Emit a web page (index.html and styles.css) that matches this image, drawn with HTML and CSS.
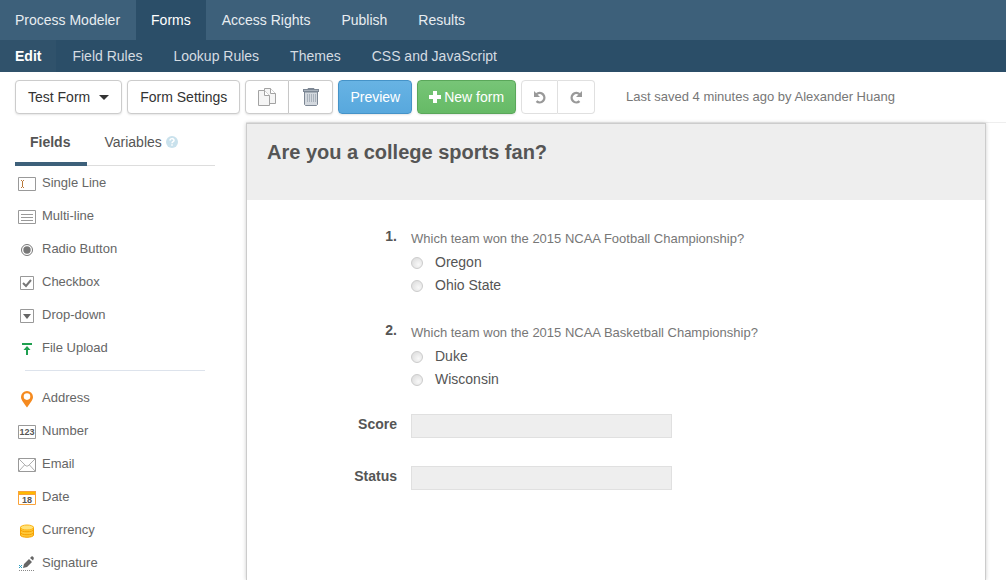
FILE: index.html
```html
<!DOCTYPE html>
<html lang="en">
<head>
    <meta charset="UTF-8">
    <meta name="viewport" content="width=device-width, initial-scale=1.0">
    <title>Test Form - Form Builder</title>
    <link rel="stylesheet" href="styles.css">
</head>
<body>
    <nav class="main-nav">
        <a href="#">Process Modeler</a>
        <a href="#" class="active">Forms</a>
        <a href="#">Access Rights</a>
        <a href="#">Publish</a>
        <a href="#">Results</a>
    </nav>
    <nav class="sub-nav">
        <a href="#" class="active">Edit</a>
        <a href="#">Field Rules</a>
        <a href="#">Lookup Rules</a>
        <a href="#">Themes</a>
        <a href="#">CSS and JavaScript</a>
    </nav>

    <div class="toolbar">
        <button type="button" class="btn" aria-haspopup="true">Test Form <span class="caret"></span></button>
        <button type="button" class="btn">Form Settings</button>
        <div class="btn-group">
            <button type="button" class="btn btn-icon" aria-label="Copy form">
                <svg width="18" height="18" viewBox="0 0 18 18" fill="#f5f5f5" stroke="#a3a3a3">
                    <path d="M6.5 .5h6l5 5v10h-11z"/>
                    <path d="M12.5 .5v5h5" fill="#fff"/>
                    <path d="M.5 2.500h6l5 5v10H.5z"/>
                    <path d="M6.5 2.500v5h5" fill="#fff"/>
                </svg>
            </button>
            <button type="button" class="btn btn-icon" aria-label="Delete form">
                <svg width="16" height="18" viewBox="0 0 16 18" fill="none">
                    <path d="M5 1.500V.5h6v1" stroke="#7d8794"/>
                    <path d="M0 1h16v3H0z" fill="#7d8794"/>
                    <path d="M1 2.500h14" stroke="#a9b2bc"/>
                    <path d="M1.500 4v12.500l1 1h11l1-1V4z" fill="#d3d8de" stroke="#7d8794"/>
                    <path d="M4.500 6v8M6.500 6v8M8.500 6v8M10.500 6v8M12.500 6v8" stroke="#a9b2bc"/>
                </svg>
            </button>
        </div>
        <button type="button" class="btn btn-blue">Preview</button>
        <button type="button" class="btn btn-green">
            <svg width="12" height="12" viewBox="0 0 12 12"><path d="M4 0h4v4h4v4H8v4H4V8H0V4h4z" fill="#fff"/></svg>
            New form
        </button>
        <div class="btn-group btn-group-light">
            <button type="button" class="btn btn-history" aria-label="Undo">
                <svg width="14" height="13" viewBox="0 0 14 13" fill="none">
                    <path d="M3.500 3.200A4.700 4.700 0 1 1 3.500 10.200" stroke="#999" stroke-width="2.400"/>
                    <path d="M1 0v6h6z" fill="#999"/>
                </svg>
            </button>
            <button type="button" class="btn btn-history" aria-label="Redo">
                <svg width="14" height="13" viewBox="0 0 14 13" fill="none">
                    <path d="M10.500 3.200A4.700 4.700 0 1 0 10.500 10.200" stroke="#999" stroke-width="2.400"/>
                    <path d="M13 0v6H7z" fill="#999"/>
                </svg>
            </button>
        </div>
        <span class="last-saved">Last saved 4 minutes ago by Alexander Huang</span>
    </div>

    <div class="builder">
        <aside class="sidebar">
            <div class="tabs">
                <a href="#" class="active">Fields</a>
                <a href="#">Variables
                    <svg width="12" height="12" viewBox="0 0 12 12" fill="none">
                        <circle cx="6" cy="6" r="6" fill="#c9e1ec"/>
                        <path d="M4 4.600C4 2 8 2 8 4.400 8 5.800 6 5.600 6 7.300M6 8.300v1.500" stroke="#fff" stroke-width="1.500"/>
                    </svg>
                </a>
            </div>
            <ul class="field-list">
                <li>
                    <svg width="18" height="18" viewBox="0 0 18 18" fill="none">
                        <path d="M.5 2.500h17v13H.5z" stroke="#999"/>
                        <path d="M3 5.500h1M5 5.500h1M4.500 6v6M3 12.500h1M5 12.500h1" stroke="#b8793a"/>
                    </svg>
                    Single Line
                </li>
                <li>
                    <svg width="18" height="18" viewBox="0 0 18 18" fill="none" stroke="#999">
                        <path d="M.5 2.500h17v13H.5zM3 6.500h12M3 9.500h12M3 12.500h12"/>
                    </svg>
                    Multi-line
                </li>
                <li>
                    <svg width="18" height="18" viewBox="0 0 18 18">
                        <circle cx="9" cy="9" r="5.500" fill="#fff" stroke="#777"/>
                        <circle cx="9" cy="9" r="3.700" fill="#777"/>
                    </svg>
                    Radio Button
                </li>
                <li>
                    <svg width="18" height="18" viewBox="0 0 18 18" fill="none">
                        <path d="M2.500 2.500h13v13h-13z" stroke="#999"/>
                        <path d="M5 9l3 3 5-6" stroke="#777" stroke-width="2"/>
                    </svg>
                    Checkbox
                </li>
                <li>
                    <svg width="18" height="18" viewBox="0 0 18 18" fill="none">
                        <path d="M2.500 2.500h13v13h-13z" stroke="#999"/>
                        <path d="M5 7h8l-4 5z" fill="#666"/>
                    </svg>
                    Drop-down
                </li>
                <li>
                    <svg width="18" height="18" viewBox="0 0 18 18" fill="#1fa050">
                        <path d="M4 3h10v2H4zM9 6l3.500 4H10v5H8v-5H5.500z"/>
                    </svg>
                    File Upload
                </li>
            </ul>
            <hr class="divider">
            <ul class="field-list">
                <li>
                    <svg width="18" height="18" viewBox="0 0 18 18">
                        <path fill-rule="evenodd" d="M9 1a6 6 0 0 1 6 6c0 3-3 6-6 10.500C6 13 3 10 3 7a6 6 0 0 1 6-6zm0 2.300a3.300 3.300 0 1 0 0 6.600 3.300 3.300 0 0 0 0-6.600z" fill="#f58a1f"/>
                    </svg>
                    Address
                </li>
                <li>
                    <svg width="18" height="18" viewBox="0 0 18 18">
                        <path d="M.5 2.500h17v13H.5z" fill="#fff" stroke="#999"/>
                        <text x="9" y="12" class="icon-text">123</text>
                    </svg>
                    Number
                </li>
                <li>
                    <svg width="18" height="18" viewBox="0 0 18 18" fill="none" stroke="#999">
                        <path d="M.5 2.500h17v13H.5z"/>
                        <path d="M1 3l7 7h2l7-7M1 15l5.500-6M17 15l-5.500-6" stroke-width=".8"/>
                    </svg>
                    Email
                </li>
                <li>
                    <svg width="18" height="18" viewBox="0 0 18 18">
                        <path d="M.5 3.500h17v12H.5z" fill="#fff" stroke="#f9a33a"/>
                        <path d="M0 2h18v4H0z" fill="#f9a33a"/>
                        <path d="M1 3h16v2H1z" fill="#fdb900"/>
                        <text x="9" y="14" class="icon-text">18</text>
                    </svg>
                    Date
                </li>
                <li>
                    <svg width="18" height="18" viewBox="0 0 18 18" stroke="#f5a000">
                        <path d="M2.500 5v8c0 3 13 3 13 0V5z" fill="#ffc83a"/>
                        <path d="M2.500 7.500c0 3 13 3 13 0M2.500 10.500c0 3 13 3 13 0" fill="none"/>
                        <ellipse cx="9" cy="5.500" rx="6.500" ry="2.500" fill="#ffe27a" stroke="#fdb515"/>
                    </svg>
                    Currency
                </li>
                <li>
                    <svg width="18" height="18" viewBox="0 0 18 18">
                        <path d="M5 13l1-4 5-5 3 3-5 5zM12 3l1.500-1.500c1-.8 3 1.200 2.200 2.200L15 5.500z" fill="#666"/>
                        <path d="M1 10l3 3M4 10l-3 3" stroke="#2a9dc0"/>
                        <path d="M1 15.500h15" stroke="#888" stroke-dasharray="1 1"/>
                    </svg>
                    Signature
                </li>
            </ul>
        </aside>

        <main class="canvas">
            <form class="form-preview">
                <header class="form-header">
                    <h1>Are you a college sports fan?</h1>
                </header>
                <div class="form-body">
                    <div class="form-row" role="radiogroup" aria-labelledby="q1">
                        <span class="row-label">1.</span>
                        <div>
                            <p class="question" id="q1">Which team won the 2015 NCAA Football Championship?</p>
                            <label class="option"><input type="radio" name="football"> Oregon</label>
                            <label class="option"><input type="radio" name="football"> Ohio State</label>
                        </div>
                    </div>
                    <div class="form-row" role="radiogroup" aria-labelledby="q2">
                        <span class="row-label">2.</span>
                        <div>
                            <p class="question" id="q2">Which team won the 2015 NCAA Basketball Championship?</p>
                            <label class="option"><input type="radio" name="basketball"> Duke</label>
                            <label class="option"><input type="radio" name="basketball"> Wisconsin</label>
                        </div>
                    </div>
                    <div class="form-row">
                        <label class="row-label" for="score">Score</label>
                        <input type="text" class="text-field" id="score" readonly>
                    </div>
                    <div class="form-row">
                        <label class="row-label" for="status">Status</label>
                        <input type="text" class="text-field" id="status" readonly>
                    </div>
                </div>
            </form>
        </main>
    </div>
</body>
</html>
```

FILE: styles.css
```css
* {
    box-sizing: border-box;
}
body {
    margin: 0;
    min-height: 100vh;
    display: flex;
    flex-direction: column;
    font-family: "Liberation Sans", Arial, sans-serif;
    font-size: 14px;
    line-height: 20px;
    color: #555;
    background-color: #fff;
}
a {
    color: inherit;
    text-decoration: none;
}
svg {
    display: block;
    flex: none;
}

/* navigation */
.main-nav, .sub-nav {
    display: flex;
    gap: 1px;
}
.main-nav {
    background-color: #3d607a;
    color: #e8edf1;
}
.main-nav a {
    padding: 10px 15px;
}
.main-nav .active {
    background-color: #2b4e68;
    color: #fff;
}
.sub-nav {
    background-color: #2b4e68;
    color: #d5dce2;
}
.sub-nav a {
    padding: 6px 15px;
}
.sub-nav .active {
    background-color: #30526b;
    color: #fff;
    font-weight: bold;
}

/* toolbar */
.toolbar {
    display: flex;
    align-items: center;
    gap: 5px;
    padding: 8px 15px;
}
.btn {
    display: flex;
    align-items: center;
    gap: 3px;
    height: 34px;
    padding: 0 12px;
    font: inherit;
    color: #333;
    background-color: #fff;
    border: 1px solid #ccc;
    border-radius: 4px;
    box-shadow: 0 1px 2px rgba(0, 0, 0, 0.1);
    cursor: pointer;
    white-space: nowrap;
}
.btn:hover {
    background-color: #f2f2f2;
}
.caret {
    margin-left: 6px;
    border: 5px solid transparent;
    border-top-color: #333;
    border-bottom: 0;
}
.btn-group {
    display: flex;
}
.btn-group .btn:first-child {
    border-radius: 4px 0 0 4px;
}
.btn-group .btn:last-child {
    border-left: 0;
    border-radius: 0 4px 4px 0;
}
.btn-group-light .btn {
    border-color: #e0e0e0;
    box-shadow: none;
}
.btn-icon {
    justify-content: center;
    width: 44px;
}
.btn-history {
    justify-content: center;
    width: 37px;
}
.btn-blue {
    padding: 0 11px;
    color: #fff;
    background: linear-gradient(#67b3e4, #58a8dd);
    border-color: #4593c8;
}
.btn-green {
    padding: 0 11px;
    color: #fff;
    background: linear-gradient(#77c577, #66ba66);
    border-color: #5aa75a;
}
.last-saved {
    margin-left: 26px;
    font-size: 13px;
    color: #777;
}

/* sidebar */
.builder {
    flex: 1;
    display: flex;
    gap: 31px;
    padding-left: 15px;
}
.sidebar {
    flex: none;
    width: 200px;
    padding-top: 1px;
}
.tabs {
    display: flex;
    height: 43px;
    border-bottom: 1px solid #ddd;
}
.tabs a {
    display: flex;
    align-items: center;
    gap: 4px;
    height: 43px;
    padding: 0 15px 5px 17px;
}
.tabs .active {
    padding: 0 17px 1px 15px;
    border-bottom: 4px solid #3d607a;
    font-weight: bold;
}
.field-list {
    list-style: none;
    margin: 0;
    padding: 0 3px;
    font-size: 13px;
    color: #666;
}
.field-list li {
    display: flex;
    align-items: center;
    gap: 6px;
    height: 33px;
    cursor: move;
}
.field-list svg {
    margin-top: 3px;
}
.icon-text {
    font-size: 9px;
    font-weight: bold;
    fill: #555;
    text-anchor: middle;
}
.divider {
    height: 1px;
    margin: 6px 10px 10px;
    border: 0;
    background-color: #dde3ec;
}

/* form preview */
.canvas {
    flex: 1;
    display: flex;
    padding-right: 20px;
    border-top: 1px solid #eee;
}
.form-preview {
    flex: 1;
    border: 1px solid #ccc;
    border-bottom: 0;
    box-shadow: 0 0 4px rgba(0, 0, 0, 0.2);
}
.form-header {
    padding: 18px 20px 38px;
    background-color: #eee;
}
.form-header h1 {
    margin: 0;
    font-size: 20px;
    line-height: 20px;
}
.form-body {
    display: flex;
    flex-direction: column;
    gap: 24px;
    padding: 26px 20px 60px 0;
}
.form-row {
    display: flex;
    align-items: flex-start;
    gap: 14px;
    min-height: 28px;
}
.row-label {
    flex: none;
    width: 150px;
    font-weight: bold;
    text-align: right;
}
.question {
    margin: 0;
    padding-top: 2px;
    font-size: 13px;
    line-height: 22px;
    color: #777;
}
.option {
    display: flex;
    align-items: center;
    gap: 12px;
    height: 23px;
}
.option input {
    appearance: none;
    width: 12px;
    height: 12px;
    margin: 2px 0 0;
    border: 1px solid #ccc;
    border-radius: 50%;
    background: radial-gradient(circle at 65% 65%, #f8f8f8, #d8d8d8);
}
.option input:checked {
    background: #777;
}
.text-field {
    width: 261px;
    height: 24px;
    padding: 2px 6px;
    font: inherit;
    background-color: #eee;
    border: 1px solid #e0e0e0;
}
```
